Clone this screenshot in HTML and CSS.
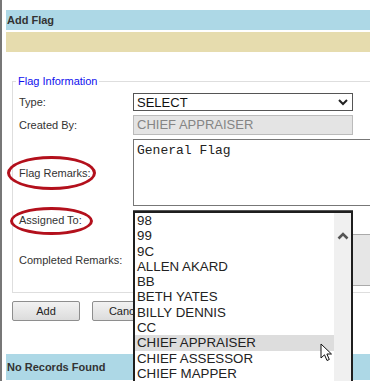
FILE: index.html
```html
<!DOCTYPE html>
<html lang="en">

<head>
  <meta charset="UTF-8">
  <title>Add Flag</title>
  <link rel="stylesheet" href="styles.css">
</head>

<body>
  <div class="page">
    <div class="title-bar">Add Flag</div>
    <div class="tool-bar"></div>

    <fieldset class="flag-info">
      <legend>Flag Information</legend>
      <div class="form-grid">
        <label class="lbl">Type:</label>
        <div class="select-box">
          <span>SELECT</span>
          <svg class="chev" width="10" height="7" viewBox="0 0 10 7"><polyline points="1,1 5,5 9,1" fill="none" stroke="#222" stroke-width="2"/></svg>
        </div>

        <label class="lbl">Created By:</label>
        <div class="readonly-box">CHIEF APPRAISER</div>

        <label class="lbl">Flag Remarks:<span class="ring ring-remarks"></span></label>
        <div class="text-box">General Flag</div>

        <label class="lbl">Assigned To:<span class="ring ring-assigned"></span></label>
        <div class="select-box tall"></div>

        <label class="lbl">Completed Remarks:</label>
        <div class="text-box disabled"></div>
      </div>
    </fieldset>

    <div class="buttons">
      <button class="btn">Add</button>
      <button class="btn">Cancel</button>
    </div>

    <div class="title-bar results">No Records Found</div>
  </div>

  <!-- open dropdown of "Assigned To" -->
  <div class="dropdown">
    <ul class="options">
      <li>98</li>
      <li>99</li>
      <li>9C</li>
      <li>ALLEN AKARD</li>
      <li>BB</li>
      <li>BETH YATES</li>
      <li>BILLY DENNIS</li>
      <li>CC</li>
      <li class="hover">CHIEF APPRAISER</li>
      <li>CHIEF ASSESSOR</li>
      <li>CHIEF MAPPER</li>
    </ul>
    <div class="scrollbar">
      <svg class="up" width="12" height="8" viewBox="0 0 12 8"><polyline points="1.5,6.5 6,2 10.5,6.5" fill="none" stroke="#555" stroke-width="2.6"/></svg>
    </div>
  </div>

  <svg class="cursor" width="14" height="20" viewBox="0 0 14 20">
    <path d="M1 1 L1 15 L4.5 11.8 L7 17.5 L9.3 16.5 L6.9 11 L11.5 11 Z" fill="#fff" stroke="#111" stroke-width="1" stroke-linejoin="round"/>
  </svg>
</body>

</html>
```

FILE: styles.css
```css
html,
body {
  margin: 0;
  overflow: hidden;
}

body {
  font-family: "Liberation Sans", Arial, sans-serif;
  font-size: 11px;
  color: #333;
  background: #fff;
}

.page {
  border-left: 2px solid #777;
  padding-left: 4px;
  padding-top: 10px;
  min-height: 381px;
  box-sizing: border-box;
}

.title-bar {
  background-color: #add8e6;
  height: 20px;
  line-height: 20px;
  padding-left: 1px;
  font-weight: bold;
  color: #333;
}

.tool-bar {
  background-color: #e6dcae;
  height: 20px;
  margin-top: 2px;
}

/* Flag information block */
.flag-info {
  margin: 22px 0 8px 6px;
  padding: 5px 0 6px 6px;
  border: 1px solid #dedede;
  border-right: none;
  min-width: 0;
}

.flag-info legend {
  color: #1010ee;
  line-height: 14px;
  padding: 0 2px;
  margin-left: -3px;
}

.form-grid {
  display: grid;
  grid-template-columns: 114px 1fr;
  row-gap: 4px;
  align-items: center;
}

.lbl {
  position: relative;
}

.ring {
  position: absolute;
  border: 3.5px solid #b3101c;
  border-radius: 50%;
}

.ring-remarks {
  left: -12px;
  top: -11px;
  width: 83px;
  height: 28px;
}

.ring-assigned {
  left: -9px;
  top: -7px;
  width: 77px;
  height: 22px;
}

.select-box {
  box-sizing: border-box;
  width: 220px;
  height: 18px;
  border: 1px solid #555;
  font-size: 13px;
  color: #111;
  padding: 0 4px 0 3px;
  display: flex;
  align-items: center;
  justify-content: space-between;
}

.select-box.tall {
  height: 20px;
}

.readonly-box {
  box-sizing: border-box;
  width: 220px;
  height: 20px;
  border: 1px solid #bbb;
  background: #e4e4e4;
  color: #858585;
  font-size: 13px;
  line-height: 18px;
  padding-left: 3px;
}

.text-box {
  box-sizing: border-box;
  width: 260px;
  height: 67px;
  border: 1px solid #777;
  font-family: "Liberation Mono", "Courier New", monospace;
  font-size: 13px;
  line-height: 16px;
  padding: 3px 3px;
  color: #222;
}

.text-box.disabled {
  height: 52px;
  border-color: #aaa;
  background: #e6e6e6;
}

.buttons {
  display: flex;
  gap: 12px;
  margin-left: 6px;
}

.btn {
  width: 68px;
  height: 20px;
  border: 1px solid #8e8e8e;
  border-radius: 2px;
  background: linear-gradient(#f2f2f2, #dcdcdc);
  font-family: "Liberation Sans", Arial, sans-serif;
  font-size: 11px;
  color: #222;
  padding: 0;
}

.results {
  margin-top: 33px;
  height: 26px;
  line-height: 26px;
}

/* open select list */
.dropdown {
  position: absolute;
  left: 133px;
  top: 211px;
  width: 220px;
  height: 174px;
  box-sizing: border-box;
  border: 2px solid #1e1e1e;
  border-bottom: none;
  background: #fff;
  display: flex;
  overflow: hidden;
}

.options {
  list-style: none;
  margin: 0;
  padding: 0;
  flex: 1;
  font-family: "Liberation Sans", Arial, sans-serif;
  font-size: 13.3px;
  color: #222;
}

.options li {
  height: 15.3px;
  line-height: 15.3px;
  padding-left: 2px;
  white-space: nowrap;
}

.options li.hover {
  background: #dddddd;
}

.scrollbar {
  width: 17px;
  background: #f0f0f0;
  position: relative;
}

.scrollbar .up {
  position: absolute;
  left: 3px;
  top: 19px;
}

.cursor {
  position: absolute;
  left: 320px;
  top: 343px;
}
```
